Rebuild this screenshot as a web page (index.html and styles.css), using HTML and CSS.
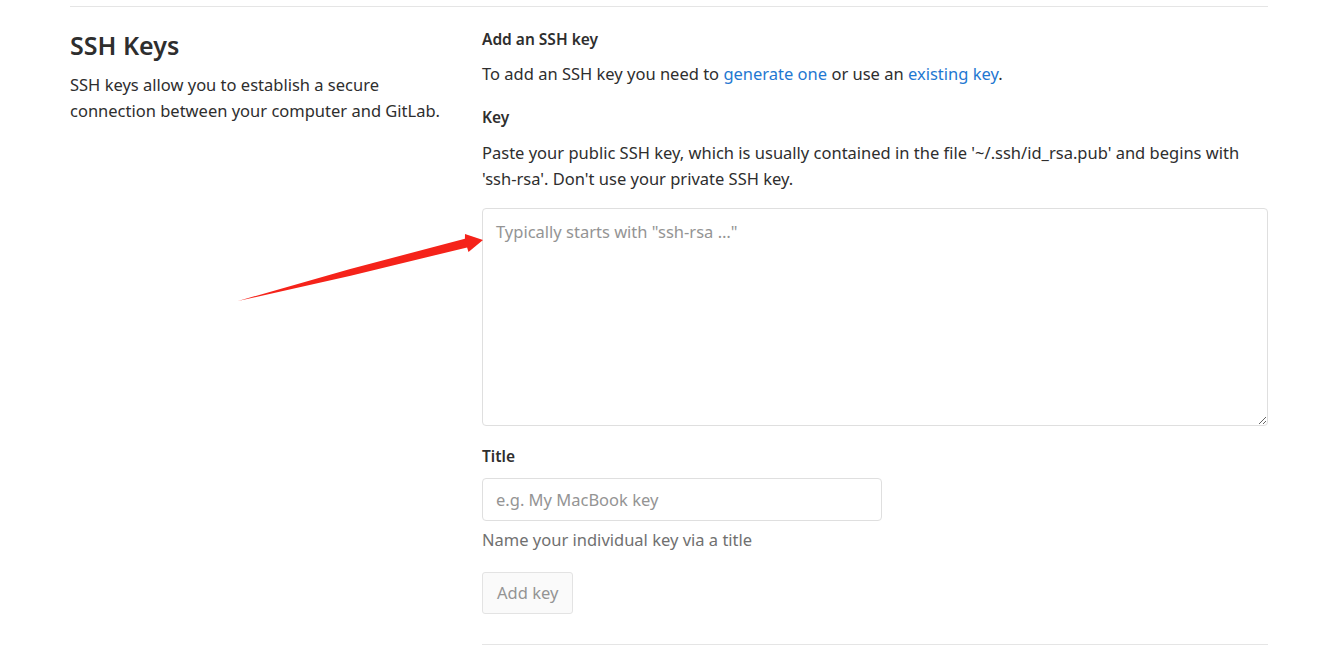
FILE: index.html
```html
<!DOCTYPE html>
<html lang="en">
<head>
<meta charset="utf-8">
<title>SSH Keys</title>
<link rel="stylesheet" href="styles.css">
</head>
<body>
<div class="page">
  <div class="row">
    <div class="side">
      <h4 class="side-title">SSH Keys</h4>
      <p class="side-text">SSH keys allow you to establish a secure connection between your computer and GitLab.</p>
    </div>
    <div class="main">
      <h5 class="sub-title">Add an SSH key</h5>
      <p class="intro">To add an SSH key you need to <a href="#">generate one</a> or use an <a href="#">existing key</a>.</p>
      <form class="form">
        <label class="label" for="key">Key</label>
        <p class="desc">Paste your public SSH key, which is usually contained in the file '~/.ssh/id_rsa.pub' and begins with 'ssh-rsa'. Don't use your private SSH key.</p>
        <textarea id="key" class="textarea" placeholder="Typically starts with &quot;ssh-rsa …&quot;"></textarea>
        <label class="label" for="title">Title</label>
        <input id="title" class="input" type="text" placeholder="e.g. My MacBook key">
        <p class="help">Name your individual key via a title</p>
        <button class="btn" type="button" disabled>Add key</button>
      </form>
      <div class="divider"></div>
    </div>
  </div>
</div>
<svg class="arrow" width="1331" height="647" viewBox="0 0 1331 647">
  <polygon points="238,301 349.3,269.2 464.9,238.8 465,234 483,240 468.5,252 467.1,247.4 350.7,275.8" fill="#f5231a"/>
</svg>
</body>
</html>
```
FILE: styles.css
```css
* { box-sizing: border-box; }
html, body { margin: 0; padding: 0; background: #fff; }
body {
  font-family: "Noto Sans", "Open Sans", "Liberation Sans", sans-serif;
  font-size: 16.5px;
  color: #2e2e2e;
  line-height: 26px;
}
.page {
  padding-left: 70px;
  width: 1268px;
  padding-top: 6px;
}
.row {
  display: flex;
  border-top: 1px solid #e5e5e5;
  padding-top: 19px;
}
.side {
  width: 412px;
  padding-right: 14px;
  flex: none;
}
.side-title {
  margin: 3px 0 11px;
  font-size: 25px;
  line-height: 32px;
  font-weight: 600;
  color: #2e2e2e;
}
.side-text { margin: 0; }
.main { flex: 1; }
.sub-title {
  margin: 0 0 9px;
  font-size: 15.5px;
  font-weight: 600;
  line-height: 26px;
}
.intro { margin: 0 0 17px; }
.intro a { color: #1f78d1; text-decoration: none; }
.form { display: flex; flex-direction: column; align-items: flex-start; }
.label {
  display: block;
  font-size: 15.5px;
  font-weight: 600;
  line-height: 26px;
  margin-bottom: 10px;
}
.desc { margin: 0 0 16px; }
.textarea {
  display: block;
  width: 786px;
  height: 218px;
  border: 1px solid #dfdfdf;
  border-radius: 4px;
  padding: 10px 13px;
  font: inherit;
  line-height: 26px;
  color: #2e2e2e;
  margin: 0 0 17px;
  resize: vertical;
}
.input {
  display: block;
  width: 400px;
  height: 43px;
  border: 1px solid #dfdfdf;
  border-radius: 4px;
  padding: 0 13px;
  font: inherit;
  color: #2e2e2e;
  margin: -1px 0 0;
}
.textarea::placeholder, .input::placeholder { color: #949494; opacity: 1; }
.help {
  margin: 6px 0 19px;
  color: #707070;
}
.btn {
  height: 42px;
  padding: 0 14px;
  font: inherit;
  color: #949494;
  background: #fafafa;
  border: 1px solid #e3e3e3;
  border-radius: 3px;
}
.divider {
  margin-top: 30px;
  border-top: 1px solid #e5e5e5;
  width: 786px;
}
.arrow {
  position: absolute;
  left: 0;
  top: 0;
  pointer-events: none;
}
```
